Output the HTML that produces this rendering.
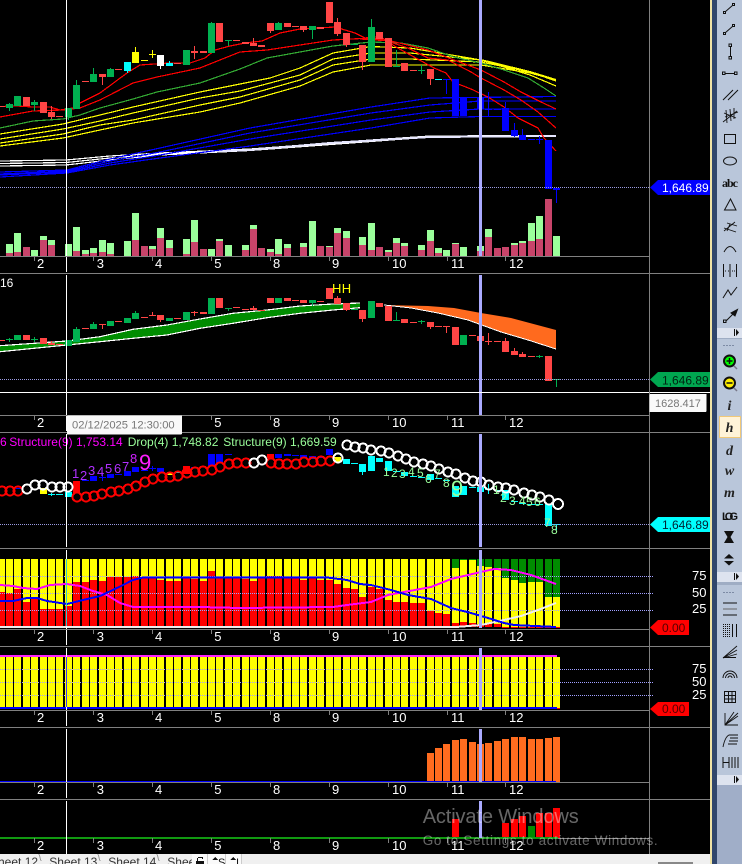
<!DOCTYPE html>
<html><head><meta charset="utf-8"><title>Chart</title>
<style>html,body{margin:0;padding:0;background:#000;width:742px;height:864px;overflow:hidden}svg{display:block;font-family:"Liberation Sans",sans-serif}</style></head>
<body>
<svg width="742" height="864" viewBox="0 0 742 864" shape-rendering="crispEdges">
<defs><path id="bars" d="M-2 0h7v1h-7zM6 0h7v1h-7zM14 0h7v1h-7zM23 0h7v1h-7zM31 0h7v1h-7zM40 0h7v1h-7zM48 0h7v1h-7zM56 0h7v1h-7zM65 0h7v1h-7zM73 0h7v1h-7zM82 0h7v1h-7zM90 0h7v1h-7zM99 0h7v1h-7zM107 0h7v1h-7zM115 0h7v1h-7zM124 0h7v1h-7zM132 0h7v1h-7zM141 0h7v1h-7zM149 0h7v1h-7zM157 0h7v1h-7zM166 0h7v1h-7zM174 0h7v1h-7zM183 0h7v1h-7zM191 0h7v1h-7zM200 0h7v1h-7zM208 0h7v1h-7zM216 0h7v1h-7zM225 0h7v1h-7zM233 0h7v1h-7zM242 0h7v1h-7zM250 0h7v1h-7zM258 0h7v1h-7zM267 0h7v1h-7zM275 0h7v1h-7zM284 0h7v1h-7zM292 0h7v1h-7zM300 0h7v1h-7zM309 0h7v1h-7zM317 0h7v1h-7zM326 0h7v1h-7zM334 0h7v1h-7zM343 0h7v1h-7zM351 0h7v1h-7zM359 0h7v1h-7zM368 0h7v1h-7zM376 0h7v1h-7zM385 0h7v1h-7zM393 0h7v1h-7zM401 0h7v1h-7zM410 0h7v1h-7zM418 0h7v1h-7zM427 0h7v1h-7zM435 0h7v1h-7zM443 0h7v1h-7zM452 0h7v1h-7zM460 0h7v1h-7zM469 0h7v1h-7zM477 0h7v1h-7zM485 0h7v1h-7zM494 0h7v1h-7zM502 0h7v1h-7zM511 0h7v1h-7zM519 0h7v1h-7zM528 0h7v1h-7zM536 0h7v1h-7zM545 0h7v1h-7zM553 0h7v1h-7z"/></defs>
<rect width="742" height="864" fill="#000"/>

<!-- MAIN: EMA lines -->
<g fill="none" stroke-width="1.2">
<g stroke="#fff">
<polyline points="0,161 66,160 110,156 160,153 250,149 371,140 430,136 556,135.5"/>
<polyline points="0,163.5 66,162.5 110,158 160,154 250,149.5 371,141 430,136.5 556,136"/>
<polyline points="0,166 66,165 110,160 160,155 250,150.5 371,141.5 430,137 556,136.5"/>
</g>
<polyline stroke="#e6e6ff" stroke-width="2" points="200,152 250,150 330,143 371,140.5 430,137 556,136"/>
<g stroke="#0000ff">
<polyline points="0,172 67,170 110,159 160,148 250,128 371,107 430,98 556,96.5"/>
<polyline points="0,174 67,171 110,161 160,152 250,133 371,113 430,105 480,101 556,101"/>
<polyline points="0,175 67,172 110,163 160,155 250,139 371,120 430,112 480,109 556,109"/>
<polyline points="0,177 67,173 110,165 160,158 250,146 371,128 430,118 480,116.5 556,116.5"/>
</g>
<g stroke="#ffff00">
<polyline points="0,134 63,124 100,115 133,107 200,92 240,84 270,78 300,68 333,53 371,46.5 410,48 481,60 530,75 556,86"/>
<polyline points="0,139 63,129 100,121 133,113 200,98 240,91 300,75 333,59 371,53 410,53 481,60 530,72 556,81"/>
<polyline points="0,143 63,134 100,125 133,120 200,105 240,97 300,80 333,65 371,59 410,59 481,62 530,72 556,80"/>
<polyline points="0,146 63,138 100,130 133,123 200,112 240,103 300,86 333,72 371,65 410,65 481,65 530,73 556,80"/>
<polyline stroke-width="2" points="481,60 530,72 556,80"/>
</g>
<polyline stroke="#33aa33" points="0,128 33,121 63,119 80,115 100,108 133,99 157,92 200,83 240,69 267,58 333,46 371,42 401,43 428,48 454,57 481,63 504,70 528,78 544,88 556,96"/>
<g stroke="#ff0000">
<polyline points="360,39 391,41 428,50 454,60 481,70 504,82 521,92 541,102 556,109"/>
<polyline points="0,117 33,111 63,110 80,108 100,100 133,83 157,77 200,68 240,52 267,50 333,40 371,38 384,40 408,48 428,58 448,60 471,72 481,78 504,90 521,100 538,112 556,128"/>
<polyline points="0,106.5 17,106 33,107 50,107 60,110 73,108 80,103 100,93 127,73 140,65 170,63 190,63 205,58 215,50 230,46 245,43 262,41 280,33 300,29 335,27 355,33 365,38 371,37 381,37 396,47 414,57 434,68 446,73 453,82 471,89 488,97 504,107 518,118 538,128 544,138 556,151"/>
</g>
</g>

<!-- MAIN candles -->
<path fill="#ff4545" d="M-2 106h7v1h-7zM23 97h7v9h-7zM40 102h7v11h-7zM48 112h7v5h-7zM51 106h1v13h-1zM56 116h7v1h-7zM82 81h7v1h-7zM99 74h7v3h-7zM102 74h1v11h-1zM115 69h7v1h-7zM174 63h7v1h-7zM191 51h7v2h-7zM194 46h1v13h-1zM200 51h7v2h-7zM216 23h7v19h-7zM233 40h7v1h-7zM242 42h7v2h-7zM250 43h7v3h-7zM253 38h1v8h-1zM258 45h7v2h-7zM267 23h7v8h-7zM270 31h1v2h-1zM284 23h7v4h-7zM292 26h7v1h-7zM300 26h7v4h-7zM303 30h1v2h-1zM317 27h7v2h-7zM326 2h7v21h-7zM334 22h7v12h-7zM337 18h1v18h-1zM343 33h7v12h-7zM346 45h1v2h-1zM359 45h7v17h-7zM362 62h1v8h-1zM376 32h7v7h-7zM385 38h7v29h-7zM401 63h7v8h-7zM410 70h7v1h-7zM427 69h7v10h-7zM430 79h1v6h-1z"/>
<path fill="#00b050" d="M6 104h7v4h-7zM9 103h1v8h-1zM14 96h7v10h-7zM31 102h7v3h-7zM34 100h1v11h-1zM65 108h7v9h-7zM68 117h1v3h-1zM73 85h7v24h-7zM76 80h1v5h-1zM90 74h7v8h-7zM93 68h1v6h-1zM107 69h7v8h-7zM110 68h1v1h-1zM183 50h7v15h-7zM208 23h7v30h-7zM211 22h1v1h-1zM225 40h7v1h-7zM228 41h1v5h-1zM275 23h7v7h-7zM278 22h1v1h-1zM309 26h7v4h-7zM312 30h1v9h-1zM351 44h7v1h-7zM368 27h7v35h-7zM371 19h1v8h-1zM393 66h7v1h-7zM396 50h1v16h-1zM418 70h7v1h-7zM421 65h1v9h-1z"/>
<path fill="#00ffff" d="M124 62h7v9h-7zM127 71h1v2h-1zM166 63h7v3h-7zM169 61h1v2h-1zM435 79h7v1h-7z"/>
<path fill="#ffff00" d="M132 52h7v11h-7zM135 47h1v5h-1zM141 60h7v1h-7zM149 54h7v1h-7zM152 50h1v8h-1z"/>
<path fill="#fff" d="M157 55h7v11h-7zM160 66h1v3h-1z"/>
<path fill="#0000ff" d="M443 79h7v1h-7zM446 79h1v15h-1zM452 79h7v37h-7zM460 97h7v19h-7zM469 97h7v1h-7zM477 98h7v11h-7zM480 109h1v5h-1zM485 109h7v1h-7zM488 92h1v24h-1zM494 109h7v1h-7zM502 108h7v23h-7zM505 102h1v6h-1zM511 130h7v6h-7zM514 123h1v14h-1zM519 135h7v5h-7zM522 129h1v6h-1zM528 139h7v1h-7zM536 139h7v1h-7zM539 136h1v8h-1zM545 140h7v49h-7zM553 188h7v2h-7zM556 188h1v15h-1z"/>

<!-- Volume -->
<path fill="#9bff9b" d="M6 244h7V256H6zM14 233h7V256h-7zM31 250h7V256h-7zM40 236h7V256h-7zM48 240h7V256h-7zM65 244h7V256h-7zM73 227h7V256h-7zM82 250h7V256h-7zM90 248h7V256h-7zM99 240h7V256h-7zM107 243h7V256h-7zM124 241h7V256h-7zM132 213h7V256h-7zM149 246h7V256h-7zM157 228h7V256h-7zM166 240h7V256h-7zM183 239h7V256h-7zM191 220h7V256h-7zM208 249h7V256h-7zM216 239h7V256h-7zM225 245h7V256h-7zM242 245h7V256h-7zM250 225h7V256h-7zM267 249h7V256h-7zM275 239h7V256h-7zM284 244h7V256h-7zM300 243h7V256h-7zM309 221h7V256h-7zM326 246h7V256h-7zM334 228h7V256h-7zM343 231h7V256h-7zM359 237h7V256h-7zM368 223h7V256h-7zM385 250h7V256h-7zM393 238h7V256h-7zM401 243h7V256h-7zM418 245h7V256h-7zM427 230h7V256h-7zM435 248h7V256h-7zM443 250h7V256h-7zM452 243h7V256h-7zM460 247h7V256h-7zM477 246h7V256h-7zM485 229h7V256h-7zM511 243h7V256h-7zM519 241h7V256h-7zM528 223h7V256h-7zM536 216h7V256h-7zM553 236h7V256h-7z"/>
<path fill="#c8446a" d="M6 253h7V256H6zM14 252h7V256h-7zM23 247h7V256h-7zM40 240h7V256h-7zM48 245h7V256h-7zM73 251h7V256h-7zM82 254h7V256h-7zM90 253h7V256h-7zM99 252h7V256h-7zM107 254h7V256h-7zM132 240h7V256h-7zM141 246h7V256h-7zM149 249h7V256h-7zM157 238h7V256h-7zM166 248h7V256h-7zM183 254h7V256h-7zM191 242h7V256h-7zM200 249h7V256h-7zM216 241h7V256h-7zM242 250h7V256h-7zM250 229h7V256h-7zM258 248h7V256h-7zM267 252h7V256h-7zM275 254h7V256h-7zM284 248h7V256h-7zM300 247h7V256h-7zM317 246h7V256h-7zM326 247h7V256h-7zM334 233h7V256h-7zM343 238h7V256h-7zM359 245h7V256h-7zM368 250h7V256h-7zM376 247h7V256h-7zM385 252h7V256h-7zM393 243h7V256h-7zM401 246h7V256h-7zM418 250h7V256h-7zM427 241h7V256h-7zM435 253h7V256h-7zM452 244h7V256h-7zM477 251h7V256h-7zM485 237h7V256h-7zM494 248h7V256h-7zM502 247h7V256h-7zM511 245h7V256h-7zM519 243h7V256h-7zM528 241h7V256h-7zM536 239h7V256h-7zM545 199h7V256h-7z"/>

<!-- PANE 2 -->
<path fill="#008c00" d="M0 345.7L67 341L100 336.700L133 329.300L167 325L200 319L233 313.300L267 310L300 306L333 304L360 303V307.700L333 310L300 313.300L267 317.700L233 323.300L200 328.300L167 335L133 338.300L100 341.700L67 345L0 351.700Z"/>
<g fill="none" stroke="#fff" stroke-width="1.200"><polyline points="0,351.700 67,345 100,341.700 133,338.300 167,335 200,328.300 233,323.300 267,317.700 300,313.300 333,310 360,307.700"/><polyline points="0,345.700 67,341 100,336.700 133,329.300 167,325 200,319 233,313.300 267,310 300,306 333,304 360,303"/></g>
<path fill="#ff6a1e" d="M384 305L428 306L454 308L481 313L511 318L556 330V349L528 340L501 332L468 320L438 313L411 308Z" shape-rendering="auto"/>
<polyline fill="none" stroke="#fff" points="384,305 411,308 438,313 468,320 501,332 528,340 556,349"/>
<path fill="#00b050" d="M6 339h7v1h-7zM9 338h1v4h-1zM14 335h7v5h-7zM31 339h7v1h-7zM34 337h1v5h-1zM65 340h7v6h-7zM73 329h7v13h-7zM76 327h1v2h-1zM90 324h7v5h-7zM93 322h1v2h-1zM107 321h7v5h-7zM124 318h7v5h-7zM132 313h7v6h-7zM135 311h1v2h-1zM166 318h7v3h-7zM183 312h7v8h-7zM208 298h7v16h-7zM225 308h7v1h-7zM228 309h1v2h-1zM275 298h7v5h-7zM309 300h7v3h-7zM312 303h1v3h-1zM351 309h7v1h-7zM368 301h7v17h-7zM393 320h7v1h-7zM396 312h1v8h-1zM418 321h7v1h-7zM421 320h1v4h-1zM460 335h7v10h-7zM536 356h7v1h-7zM539 355h1v3h-1zM553 379h7v1h-7zM556 379h1v8h-1z"/>
<path fill="#ff4545" d="M-2 340h7v1h-7zM23 335h7v5h-7zM40 338h7v6h-7zM48 343h7v2h-7zM51 341h1v2h-1zM56 344h7v1h-7zM82 328h7v1h-7zM99 324h7v1h-7zM102 325h1v4h-1zM115 321h7v1h-7zM141 317h7v1h-7zM149 315h7v1h-7zM152 312h1v4h-1zM157 315h7v5h-7zM160 320h1v2h-1zM174 318h7v1h-7zM191 312h7v1h-7zM194 311h1v5h-1zM200 312h7v2h-7zM216 298h7v10h-7zM233 307h7v1h-7zM242 309h7v1h-7zM250 308h7v2h-7zM253 306h1v2h-1zM258 310h7v1h-7zM267 298h7v5h-7zM284 298h7v3h-7zM292 300h7v1h-7zM300 300h7v3h-7zM317 301h7v1h-7zM326 288h7v11h-7zM334 298h7v6h-7zM337 296h1v2h-1zM343 303h7v7h-7zM346 310h1v1h-1zM359 310h7v9h-7zM362 319h1v3h-1zM376 303h7v4h-7zM385 306h7v15h-7zM401 319h7v4h-7zM410 322h7v1h-7zM427 322h7v5h-7zM430 327h1v2h-1zM435 326h7v1h-7zM443 326h7v1h-7zM446 326h1v7h-1zM452 327h7v18h-7zM469 335h7v1h-7zM477 336h7v5h-7zM480 341h1v3h-1zM485 341h7v1h-7zM488 333h1v12h-1zM494 341h7v1h-7zM502 341h7v11h-7zM505 338h1v3h-1zM511 351h7v4h-7zM514 348h1v3h-1zM519 354h7v3h-7zM522 352h1v2h-1zM528 356h7v1h-7zM545 356h7v25h-7z"/>
<text x="332" y="293" fill="#ffff00" font-size="13" letter-spacing=".4">HH</text>
<text x="0" y="287" fill="#fff" font-size="12">16</text>

<!-- PANE 3 -->
<path fill="#0000ff" d="M16 488h7v1h-7zM82 480h7v1h-7zM90 476h7v5h-7zM99 477h7v1h-7zM102 474h1v7h-1zM107 474h7v4h-7zM115 474h7v1h-7zM124 471h7v5h-7zM132 467h7v5h-7zM141 470h7v1h-7zM149 468h7v1h-7zM152 466h1v5h-1zM157 468h7v4h-7zM191 467h7v1h-7zM208 454h7v12h-7zM216 454h7v9h-7zM225 454h7v1h-7zM275 454h7v4h-7zM284 454h7v2h-7zM292 455h7v1h-7zM300 455h7v3h-7zM309 456h7v3h-7zM317 457h7v1h-7zM326 449h7v6h-7z"/>
<path fill="#ff0000" d="M73 481h7v12h-7zM183 466h7v8h-7zM267 454h7v4h-7z"/>
<path fill="#ffff00" d="M40 488h7v6h-7zM166 473h7v2h-7zM334 457h7v5h-7z"/>
<path fill="#00ffff" d="M48 494h7v1h-7zM51 493h1v3h-1zM56 494h7v1h-7zM65 492h7v5h-7zM174 472h7v1h-7zM343 459h7v5h-7zM351 463h7v1h-7zM359 464h7v8h-7zM362 472h1v3h-1zM368 456h7v15h-7zM376 458h7v4h-7zM385 461h7v10h-7zM393 471h7v1h-7zM401 472h7v4h-7zM410 476h7v1h-7zM418 477h7v1h-7zM427 474h7v6h-7zM435 478h7v1h-7zM443 480h7v1h-7zM452 486h7v11h-7zM460 486h7v9h-7zM469 487h7v1h-7zM477 487h7v5h-7zM485 489h7v1h-7zM488 484h1v10h-1zM494 490h7v1h-7zM502 490h7v10h-7zM511 501h7v1h-7zM519 503h7v1h-7zM528 504h7v1h-7zM536 504h7v1h-7zM545 504h7v22h-7zM553 524h7v1h-7zM556 525h1v5h-1z"/>
<g fill="none" stroke="#ff0000" stroke-width="2">
<circle cx="2" cy="491" r="4.500"/><circle cx="10" cy="491" r="4.500"/><circle cx="18" cy="491" r="4.500"/>
<circle cx="77" cy="497" r="4.500"/><circle cx="86" cy="497" r="4.500"/><circle cx="94" cy="496" r="4.500"/><circle cx="102" cy="494" r="4.500"/><circle cx="111" cy="492" r="4.500"/><circle cx="119" cy="491" r="4.500"/><circle cx="128" cy="489" r="4.500"/><circle cx="136" cy="486" r="4.500"/><circle cx="145" cy="482" r="4.500"/><circle cx="153" cy="479" r="4.500"/><circle cx="162" cy="477" r="4.500"/><circle cx="170" cy="477" r="4.500"/><circle cx="178" cy="476" r="4.500"/><circle cx="187" cy="473" r="4.500"/><circle cx="195" cy="472" r="4.500"/><circle cx="203" cy="471" r="4.500"/><circle cx="212" cy="470" r="4.500"/><circle cx="220" cy="467" r="4.500"/><circle cx="229" cy="464" r="4.500"/><circle cx="237" cy="463" r="4.500"/><circle cx="246" cy="463" r="4.500"/>
<circle cx="271" cy="463" r="4.500"/><circle cx="279" cy="464" r="4.500"/><circle cx="287" cy="464" r="4.500"/><circle cx="296" cy="464" r="4.500"/><circle cx="304" cy="462" r="4.500"/><circle cx="313" cy="462" r="4.500"/><circle cx="321" cy="461" r="4.500"/><circle cx="330" cy="461" r="4.500"/>
</g>
<g fill="none" stroke="#fff" stroke-width="2">
<circle cx="27" cy="489" r="4.500"/><circle cx="35" cy="485" r="4.500"/><circle cx="43" cy="485" r="4.500"/><circle cx="52" cy="487" r="4.500"/><circle cx="60" cy="487" r="4.500"/><circle cx="68" cy="487" r="4.500"/>
<circle cx="254" cy="463" r="4.500"/><circle cx="262" cy="460" r="4.500"/>
<circle cx="338" cy="458" r="4.500"/><circle cx="347" cy="445" r="4.500"/><circle cx="355" cy="447" r="4.500"/><circle cx="363" cy="448" r="4.500"/><circle cx="371" cy="450" r="4.500"/><circle cx="381" cy="451" r="4.500"/><circle cx="389" cy="453" r="4.500"/><circle cx="398" cy="456" r="4.500"/><circle cx="406" cy="459" r="4.500"/><circle cx="414" cy="462" r="4.500"/><circle cx="423" cy="464" r="4.500"/><circle cx="431" cy="466" r="4.500"/><circle cx="439" cy="469" r="4.500"/><circle cx="448" cy="472" r="4.500"/><circle cx="456" cy="474" r="4.500"/><circle cx="465" cy="478" r="4.500"/><circle cx="473" cy="481" r="4.500"/><circle cx="481" cy="482" r="4.500"/><circle cx="489" cy="485" r="4.500"/><circle cx="498" cy="487" r="4.500"/><circle cx="506" cy="488" r="4.500"/><circle cx="514" cy="490" r="4.500"/><circle cx="524" cy="493" r="4.500"/><circle cx="532" cy="495" r="4.500"/><circle cx="540" cy="497" r="4.500"/><circle cx="549" cy="500" r="4.500"/><circle cx="558" cy="504" r="5"/>
</g>
<g font-size="13" fill="#b030ff">
<text x="72" y="478">1</text><text x="80" y="480">2</text><text x="88" y="475">3</text><text x="97" y="476">4</text><text x="105" y="473">5</text><text x="114" y="473">6</text><text x="122" y="471">7</text><text x="130" y="463" fill="#d020ff">8</text><text x="139" y="470" font-size="22" fill="#ff20ff">9</text>
</g>
<g font-size="12" fill="#9bff9b">
<text x="383" y="476">1</text><text x="391" y="477">2</text><text x="399" y="478">3</text><text x="408" y="476">4</text><text x="417" y="477">5</text><text x="425" y="483">6</text><text x="434" y="478">7</text><text x="443" y="487">8</text><text x="451" y="496" font-size="22">9</text>
<text x="493" y="494">1</text><text x="500" y="502">2</text><text x="509" y="505">3</text><text x="519" y="505">4</text><text x="526" y="506">5</text><text x="534" y="506">6</text><text x="544" y="527">7</text><text x="551" y="534">8</text>
</g>
<text y="446" font-size="12" fill="#ff00ff"><tspan x="0">6</tspan><tspan x="9.3">Structure(9) 1,753.14</tspan></text>
<text y="446" font-size="12" fill="#9bff9b"><tspan x="127.7">Drop(4) 1,748.82</tspan><tspan x="223.3">Structure(9) 1,669.59</tspan></text>

<!-- PANE 4 -->
<use href="#bars" transform="translate(0,559) scale(1,68)" fill="#ffff00"/>
<path fill="#ff0000" d="M-2 592h7V626h-7zM6 593h7V626H6zM14 589h7V626h-7zM23 602h7V626h-7zM31 598h7V626h-7zM40 609h7V626h-7zM48 609h7V626h-7zM56 609h7V626h-7zM65 606h7V626h-7zM73 582h7V626h-7zM82 582h7V626h-7zM90 580h7V626h-7zM99 581h7V626h-7zM107 577h7V626h-7zM115 577h7V626h-7zM124 577h7V626h-7zM132 576h7V626h-7zM141 577h7V626h-7zM149 577h7V626h-7zM157 580h7V626h-7zM166 581h7V626h-7zM174 581h7V626h-7zM183 577h7V626h-7zM191 579h7V626h-7zM200 581h7V626h-7zM208 571h7V626h-7zM216 577h7V626h-7zM225 577h7V626h-7zM233 577h7V626h-7zM242 579h7V626h-7zM250 581h7V626h-7zM258 577h7V626h-7zM267 576h7V626h-7zM275 576h7V626h-7zM284 577h7V626h-7zM292 577h7V626h-7zM300 580h7V626h-7zM309 577h7V626h-7zM317 580h7V626h-7zM326 580h7V626h-7zM334 584h7V626h-7zM343 588h7V626h-7zM351 589h7V626h-7zM359 597h7V626h-7zM368 587h7V626h-7zM376 589h7V626h-7zM385 600h7V626h-7zM393 602h7V626h-7zM401 602h7V626h-7zM410 603h7V626h-7zM418 603h7V626h-7zM427 611h7V626h-7zM435 613h7V626h-7zM443 614h7V626h-7zM452 623h7V627h-7zM460 622h7V627h-7zM469 623h7V627h-7zM477 624h7V627h-7zM485 624h7V627h-7zM494 624h7V627h-7zM502 627h7v1h-7zM511 627h7v1h-7zM519 627h7v1h-7zM528 627h7v1h-7zM536 627h7v1h-7zM545 627h7v1h-7zM553 627h7v1h-7z"/>
<path fill="#008c00" d="M452 559h7v9h-7zM460 559h7v1h-7zM469 559h7v1h-7zM477 559h7v7h-7zM485 559h7v8h-7zM494 559h7v9h-7zM502 559h7v19h-7zM511 559h7v21h-7zM519 559h7v24h-7zM528 559h7v23h-7zM536 559h7v23h-7zM545 559h7v38h-7zM553 559h7v38h-7z"/>
<g stroke="#a0a0ff" stroke-dasharray="1 1"><path d="M0 576.500H654M0 593.500H654M0 610.500H654"/></g>
<polyline fill="none" stroke="#eee" stroke-width="2" points="0,627 456,627 481,625 504,620 521,616 538,610 556,603"/>
<g fill="none" stroke-width="2">
<polyline stroke="#ff00ff" points="0,585 13,586 23,588 37,589 50,585 67,584 80,586 93,591 107,595 120,603 133,607 200,607 240,608 333,607 347,605 371,602 388,595 404,592 431,587 451,579 481,572 494,569 511,570 531,575 556,584"/>
<polyline stroke="#0000ff" points="0,601 13,601 27,598 37,598 47,601 67,604 83,600 100,596 117,588 133,580 143,577.500 327,577.500 347,580 360,584 371,585 391,590 408,595 431,599 451,608 471,613 488,618 504,623 514,625 556,627"/>
</g>

<!-- PANE 5 -->
<use href="#bars" transform="translate(0,657) scale(1,51)" fill="#ffff00"/>
<rect x="553" y="708" width="7" height="1" fill="#ff0000"/>
<g stroke="#a0a0ff" stroke-dasharray="1 1"><path d="M0 669.500H654M0 682.500H654M0 695.500H654"/></g>
<rect x="0" y="655" width="557" height="2" fill="#ff20ff"/>
<rect x="0" y="707" width="557" height="2" fill="#0000ff"/>

<!-- PANE 6 -->
<path fill="#ff6c1f" d="M427 753h7V782h-7zM435 748h7V782h-7zM443 744h7V782h-7zM452 740h7V782h-7zM460 739h7V782h-7zM469 742h7V782h-7zM477 744h7V782h-7zM485 743h7V782h-7zM494 741h7V782h-7zM502 739h7V782h-7zM511 737h7V782h-7zM519 737h7V782h-7zM528 739h7V782h-7zM536 739h7V782h-7zM545 738h7V782h-7zM553 737h7V782h-7z"/>
<rect x="0" y="781" width="556" height="1" fill="#0000ff"/>

<!-- PANE 7 -->
<path fill="#ff0000" d="M452 819h7V838h-7zM502 823h7V838h-7zM511 819h7V838h-7zM519 816h7V838h-7zM536 813h7V838h-7zM545 813h7V838h-7zM553 808h7V838h-7z"/>
<path fill="#008c00" d="M528 826h7V838h-7z"/>
<rect x="0" y="837" width="558" height="2" fill="#119911"/>

<!-- dotted price lines -->
<g stroke="#9a9ae0" stroke-dasharray="1 1"><path d="M0 187.500H650M0 379.500H650M0 524.500H650"/></g>

<!-- crosshair -->
<g fill="#fff">
<rect x="66" y="0" width="1" height="272"/><rect x="66" y="275" width="1" height="156"/><rect x="66" y="434" width="1" height="113"/><rect x="66" y="550" width="1" height="95"/><rect x="66" y="648" width="1" height="78"/><rect x="66" y="729" width="1" height="69"/><rect x="66" y="801" width="1" height="53"/>
</g>
<rect x="66" y="559" width="1" height="67" fill="#33cccc"/><rect x="66" y="657" width="1" height="50" fill="#3333ff"/>
<g fill="#aaaaff">
<rect x="479" y="0" width="3" height="256"/><rect x="479" y="275" width="3" height="140"/><rect x="479" y="434" width="3" height="113"/><rect x="479" y="550" width="3" height="78"/><rect x="479" y="648" width="3" height="62"/><rect x="479" y="729" width="3" height="53"/><rect x="479" y="801" width="3" height="37"/>
</g>
<rect x="0" y="392" width="710" height="1" fill="#fff"/>

<!-- frame lines -->
<g fill="#808080">
<rect x="0" y="256" width="650" height="1"/><rect x="0" y="273" width="710" height="1"/><rect x="0" y="415" width="650" height="1"/><rect x="0" y="432" width="710" height="1"/><rect x="0" y="548" width="710" height="1"/><rect x="0" y="629" width="650" height="1"/><rect x="0" y="646" width="710" height="1"/><rect x="0" y="710" width="650" height="1"/><rect x="0" y="727" width="710" height="1"/><rect x="0" y="782" width="650" height="1"/><rect x="0" y="799" width="710" height="1"/><rect x="558" y="838" width="92" height="1"/>
<rect x="649" y="0" width="1" height="854"/>
<path d="M34 256h1v5h-1zM93 256h1v5h-1zM152 256h1v5h-1zM211 256h1v5h-1zM270 256h1v5h-1zM329 256h1v5h-1zM388 256h1v5h-1zM447 256h1v5h-1zM505 256h1v5h-1zM34 415h1v5h-1zM93 415h1v5h-1zM152 415h1v5h-1zM211 415h1v5h-1zM270 415h1v5h-1zM329 415h1v5h-1zM388 415h1v5h-1zM447 415h1v5h-1zM505 415h1v5h-1zM34 629h1v5h-1zM93 629h1v5h-1zM152 629h1v5h-1zM211 629h1v5h-1zM270 629h1v5h-1zM329 629h1v5h-1zM388 629h1v5h-1zM447 629h1v5h-1zM505 629h1v5h-1zM34 710h1v5h-1zM93 710h1v5h-1zM152 710h1v5h-1zM211 710h1v5h-1zM270 710h1v5h-1zM329 710h1v5h-1zM388 710h1v5h-1zM447 710h1v5h-1zM505 710h1v5h-1zM34 782h1v5h-1zM93 782h1v5h-1zM152 782h1v5h-1zM211 782h1v5h-1zM270 782h1v5h-1zM329 782h1v5h-1zM388 782h1v5h-1zM447 782h1v5h-1zM505 782h1v5h-1zM34 838h1v5h-1zM93 838h1v5h-1zM152 838h1v5h-1zM211 838h1v5h-1zM270 838h1v5h-1zM329 838h1v5h-1zM388 838h1v5h-1zM447 838h1v5h-1zM505 838h1v5h-1z"/>
</g>

<!-- axis labels -->
<g fill="#fff" font-size="13">
<text x="37" y="268">2</text><text x="96.700" y="268">3</text><text x="155" y="268">4</text><text x="214.300" y="268">5</text><text x="273" y="268">8</text><text x="332" y="268">9</text><text x="392" y="268">10</text><text x="451" y="268">11</text><text x="509" y="268">12</text>
<text x="37" y="427">2</text><text x="214.300" y="427">5</text><text x="273" y="427">8</text><text x="332" y="427">9</text><text x="392" y="427">10</text><text x="451" y="427">11</text><text x="509" y="427">12</text>
<text x="37" y="641">2</text><text x="96.700" y="641">3</text><text x="155" y="641">4</text><text x="214.300" y="641">5</text><text x="273" y="641">8</text><text x="332" y="641">9</text><text x="392" y="641">10</text><text x="451" y="641">11</text><text x="509" y="641">12</text>
<text x="37" y="722">2</text><text x="96.700" y="722">3</text><text x="155" y="722">4</text><text x="214.300" y="722">5</text><text x="273" y="722">8</text><text x="332" y="722">9</text><text x="392" y="722">10</text><text x="451" y="722">11</text><text x="509" y="722">12</text>
<text x="37" y="794">2</text><text x="96.700" y="794">3</text><text x="155" y="794">4</text><text x="214.300" y="794">5</text><text x="273" y="794">8</text><text x="332" y="794">9</text><text x="392" y="794">10</text><text x="451" y="794">11</text><text x="509" y="794">12</text>
<text x="37" y="850">2</text><text x="96.700" y="850">3</text><text x="155" y="850">4</text><text x="214.300" y="850">5</text><text x="273" y="850">8</text><text x="332" y="850">9</text><text x="392" y="850">10</text><text x="451" y="850">11</text><text x="509" y="850">12</text>
<text x="692" y="580">75</text><text x="692" y="597">50</text><text x="692" y="613">25</text>
<text x="692" y="673">75</text><text x="692" y="686">50</text><text x="692" y="699">25</text>
</g>

<!-- price tags -->
<path fill="#0000ff" d="M650 187.500L658 180H710V195H658Z" shape-rendering="auto"/>
<text x="662" y="192" fill="#fff" font-size="12">1,646.89</text>
<path fill="#00a650" d="M650 379.500L658 372H710V387H658Z" shape-rendering="auto"/>
<text x="662" y="384.500" fill="#021" font-size="12">1,646.89</text>
<path fill="#00ffff" d="M650 524.500L658 517H710V532H658Z" shape-rendering="auto"/>
<text x="662" y="529" fill="#023" font-size="12">1,646.89</text>
<path fill="#ff0000" d="M650 627.500L658 620H689V635H658Z" shape-rendering="auto"/>
<text x="662" y="632" fill="#500" font-size="12">0.00</text>
<path fill="#ff0000" d="M650 709L658 702H689V716H658Z" shape-rendering="auto"/>
<text x="662" y="713" fill="#500" font-size="12">0.00</text>

<!-- tooltips -->
<rect x="67" y="415.500" width="115" height="19" rx="1" fill="#f9f9f9"/>
<text x="72" y="428.500" fill="#777" font-size="11.200">02/12/2025 12:30:00</text>
<rect x="649.500" y="394" width="57" height="18" rx="1" fill="#f9f9f9"/>
<text x="655" y="407" fill="#777" font-size="11">1628.417</text>

<!-- bottom tabs -->
<rect x="0" y="854" width="710" height="10" fill="#f0f0f0"/>
<g fill="#333" font-size="12">
<text x="-10" y="866">Sheet 12</text><text x="49.300" y="866">Sheet 13</text><text x="108.300" y="866">Sheet 14</text><text x="167.300" y="866">Shee</text>
</g>
<g stroke="#999"><path d="M39 854l2 7M98 854l2 7M157 854l2 7"/></g>
<rect x="192" y="854" width="49" height="10" fill="#fafafa"/>
<path stroke="#ccc" d="M207.500 854v10M225.500 854v10M241.500 854v10"/>
<path fill="#111" d="M196 861h8v3h-8zM197 858h1v3h-1zM198 857h5v1h-5zM202 858h1v1h-1z"/>
<path fill="#111" d="M212 860l3-3 3 3zM230 860l3-3 3 3z"/>
<text x="218" y="866" font-size="11" fill="#111">S</text><text x="236" y="866" font-size="11" fill="#111">I</text>
<rect x="658" y="862" width="35" height="2" fill="#888"/>

<!-- right toolbar -->
<rect x="710" y="0" width="2" height="864" fill="#efe3a6"/>
<rect x="712" y="0" width="5" height="864" fill="#30466c"/>
<rect x="717" y="0" width="25" height="864" fill="#b9c6da"/>
<rect x="717" y="785" width="25" height="79" fill="#a0aec8"/>
<g fill="#dde3ef"><rect x="717" y="328" width="25" height="10"/><rect x="717" y="572" width="25" height="10"/><rect x="717" y="775" width="25" height="10"/></g>
<g fill="#9fadc4"><rect x="717" y="338" width="25" height="1"/><rect x="717" y="582" width="25" height="3"/></g>
<path fill="#111" d="M734 329h1v7h-1zM736 329l3 3.500-3 3.500zM734 573h1v7h-1zM736 573l3 3.500-3 3.500zM734 776h1v7h-1zM736 776l3 3.500-3 3.500z" shape-rendering="auto"/>
<path fill="#7d8ba5" d="M723 345h2v1h-2zM726 345h2v1h-2zM729 345h2v1h-2zM732 345h2v1h-2zM723 592h2v1h-2zM726 592h2v1h-2zM729 592h2v1h-2zM732 592h2v1h-2z"/>
<g fill="none" stroke="#111" shape-rendering="auto">
<path d="M725 12L733 5M723.500 11.500h2v2h-2zM732.500 3.500h2v2h-2z"/>
<path d="M725 33L733 26M723.500 32.500h2v2h-2zM732.500 24.500h2v2h-2z"/>
<path d="M730.500 46v10M729 44h2.500v2.500h-2.500zM729 56.500h2.500v2.500h-2.500z"/>
<path d="M725 73.500h9M722.500 72h2.500v2.500h-2.500zM734.500 72h2.500v2.500h-2.500z"/>
<path d="M723 100L733 90M728 100L738 90"/>
<path d="M723 122L737 111M725 117L738 112M724 113L736 118M726 110L727 123M730 109L731 121M734 108L734 119" stroke-width=".9"/>
<rect x="724.500" y="134.500" width="11" height="9"/>
<ellipse cx="730" cy="161" rx="6.500" ry="4"/>
<path d="M724.500 210L730.500 199L736 210Z"/>
<path d="M724 231L735 222M727 223L737 226M724 228L736 232M730 224L727 231" stroke-width=".9"/>
<path d="M724 252Q730 241 736 252"/>
<path d="M723.500 264v13M730 264v13M736.500 264v13M725 271h1M728 271h1M732 271h1M734 271h1"/>
<path d="M723 298L728 290L731 295L737 287"/>
<path d="M726 321L733 314M723.500 320h2.500v2.500h-2.500z"/>
<path fill="#111" d="M731 313L737.500 309.500L735 316Z"/>
<path d="M723 603h14M723 615h14"/><path d="M723 609h14" stroke="#666"/>
<path d="M723.500 624v13M725.500 624v13M727.500 624v13M729.500 624v13" stroke-dasharray="1 1"/><path d="M732.500 624v13M736.500 624v13"/>
<path d="M723 658L737 646M723 658L737 650M723 658L737 654M723 657.500H736" stroke-width=".9"/>
<path d="M723 678a7 7 0 0 1 14 0M725.500 678a4.500 4.500 0 0 1 9 0M728 678a2 2 0 0 1 4 0"/>
<path d="M724.500 691.500h11v11h-11zM724.500 695.500h11M724.500 699h11M728.500 691.500v11M732 691.500v11"/>
<path d="M725 713v12h13M725 725L738 713M725 725L738 716M725 725L734 712" stroke-width=".9"/>
<path d="M723 747Q725 737 729 735H738M730 738h8M729 741h9M728 744h9" stroke-width=".9"/>
<path d="M723 757v11M729 757v11M723 762.500h6M732 757v11M735 757v11M738 757v11"/>
</g>
<path fill="#111" d="M724 531h10l-3.500 6 3.500 6h-10l3.500-6z" shape-rendering="auto"/>
<path fill="#111" d="M729 554l5 4.500h-10zM729 565.500l5-4.500h-10z" shape-rendering="auto"/>
<g shape-rendering="auto">
<circle cx="729.500" cy="361" r="5.500" fill="#00ff00" stroke="#111" stroke-width="2"/>
<path d="M726.500 361h6M729.500 358v6" stroke="#111" stroke-width="1.500"/>
<path d="M734 366l3 3" stroke="#778" stroke-width="1.500"/>
<circle cx="729.500" cy="383" r="5.500" fill="#ffee00" stroke="#111" stroke-width="2"/>
<path d="M726.500 383h6" stroke="#111" stroke-width="1.500"/>
<path d="M734 388l3 3" stroke="#778" stroke-width="1.500"/>
</g>
<rect x="719.500" y="416.500" width="21" height="21" fill="#fff3d8" stroke="#f0c878"/>
<g fill="#222" font-family="'Liberation Serif',serif" font-weight="bold" font-style="italic" text-anchor="middle" font-size="14">
<text x="729.500" y="410">i</text><text x="729.500" y="432">h</text><text x="729.500" y="455">d</text><text x="729.500" y="475">w</text><text x="729.500" y="497">m</text>
</g>
<text x="722" y="187" fill="#111" font-family="'Liberation Serif',serif" font-weight="bold" font-size="12" textLength="16">abc</text>
<text x="722" y="520" fill="#111" font-weight="bold" font-size="11" textLength="16">LOG</text>

<!-- watermark -->
<g fill="#fff" fill-opacity=".4">
<text x="422.700" y="823" font-size="20" textLength="156">Activate Windows</text>
<text x="422.700" y="845" font-size="13.500" textLength="235">Go to Settings to activate Windows.</text>
</g>
</svg>
</body></html>
